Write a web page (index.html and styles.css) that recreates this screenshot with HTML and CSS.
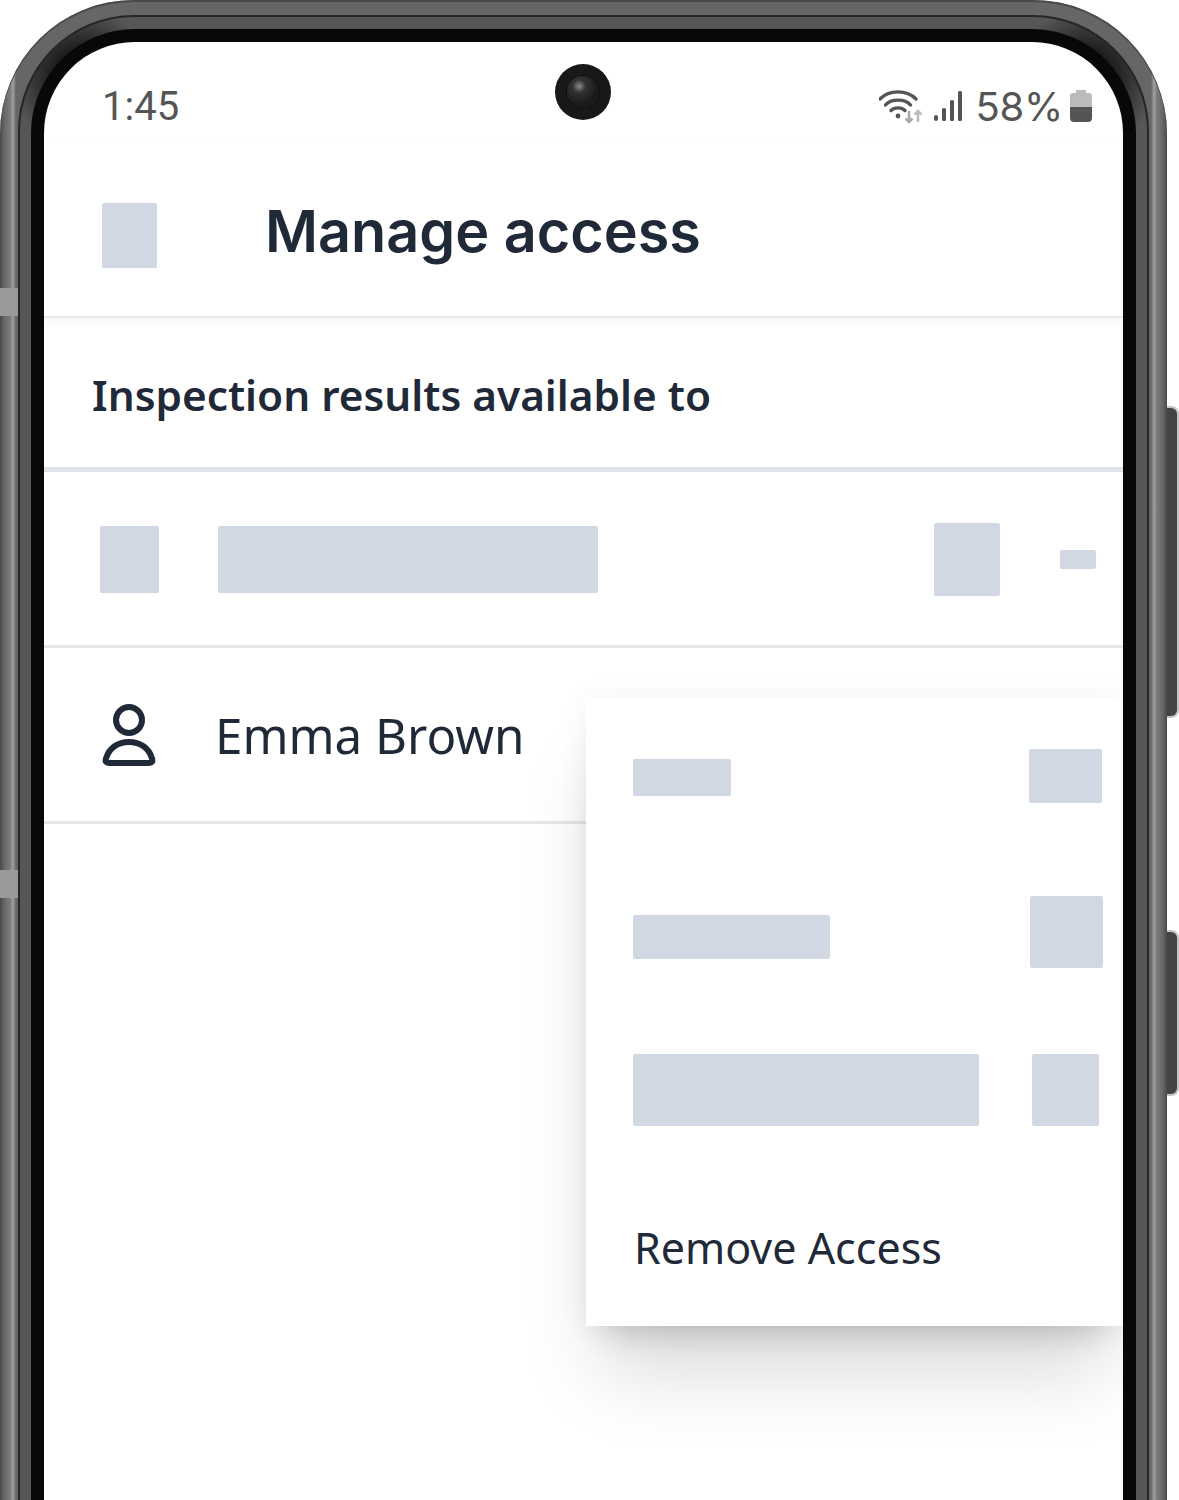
FILE: index.html
```html
<!DOCTYPE html>
<html lang="en">
<head>
    <meta charset="UTF-8">
    <meta name="viewport" content="width=device-width, initial-scale=1.0">
    <title>Manage access</title>
    <link rel="stylesheet" href="styles.css">
</head>
<body>

<div class="phone">
    <div class="side-notch side-notch-top"></div>
    <div class="side-notch side-notch-bottom"></div>
    <div class="side-btn side-btn-power"></div>
    <div class="side-btn side-btn-volume"></div>

    <div class="rim">
        <div class="rim-line">
            <div class="band">
                <div class="bezel">
                    <div class="screen">
                        <div class="camera"><div class="lens"></div></div>

                        <div class="status-bar">
                            <span class="clock">1:45</span>
                            <div class="status-icons">
                                <svg class="icon-wifi" width="44" height="36" viewBox="0 0 44 36" fill="none">
                                    <path d="M1 11 C10 1.500 28 1.500 37 11" stroke="#555" stroke-width="3.400" stroke-linecap="round"/>
                                    <path d="M6.500 17 C12 10.500 26 10.500 31.500 17" stroke="#555" stroke-width="3.400" stroke-linecap="round"/>
                                    <path d="M12 22.500 C15.500 19 22.500 19 26 22.500" stroke="#555" stroke-width="3.400" stroke-linecap="round"/>
                                    <circle cx="19" cy="28" r="2.400" fill="#555"/>
                                    <path d="M30 23 V34 M26.500 30.500 L30 34 L33.500 30.500" stroke="#aaa" stroke-width="2.600"/>
                                    <path d="M39 34 V23 M35.500 26.500 L39 23 L42.500 26.500" stroke="#bbb" stroke-width="2.600"/>
                                </svg>
                                <svg class="icon-signal" width="28" height="30" viewBox="0 0 28 30" fill="#555">
                                    <rect x="0" y="24" width="4" height="6" rx="2"/>
                                    <rect x="8" y="17" width="4" height="13" rx="1.500"/>
                                    <rect x="16" y="9" width="4" height="21" rx="1.500"/>
                                    <rect x="24" y="0" width="4" height="30" rx="1.500"/>
                                </svg>
                                <span class="battery-text">58%</span>
                                <svg class="icon-battery" width="22" height="32" viewBox="0 0 22 32">
                                    <path d="M6 0 H16 V3 H19 Q22 3 22 6 V17 H0 V6 Q0 3 3 3 H6 Z" fill="#bbb"/>
                                    <path d="M0 17 H22 V28 Q22 32 18 32 H4 Q0 32 0 28 Z" fill="#555"/>
                                </svg>
                            </div>
                        </div>

                        <div class="app-header">
                            <div class="ph ph-back"></div>
                            <h1 class="page-title">Manage access</h1>
                        </div>

                        <div class="section-title">Inspection results available to</div>

                        <div class="row row-first">
                            <div class="ph ph-avatar"></div>
                            <div class="ph ph-name"></div>
                            <div class="ph ph-role"></div>
                            <div class="ph ph-more"></div>
                        </div>

                        <div class="row row-user">
                            <svg class="icon-person" width="56" height="66" viewBox="0 0 56 66" fill="none" stroke="#1f2937" stroke-width="6">
                                <circle cx="28" cy="18" r="13"/>
                                <path d="M8 61 H48 C51 61 52 59.500 51 56.500 C48 46 39 40 28 40 C17 40 8 46 5 56.500 C4 59.500 5 61 8 61 Z"/>
                            </svg>
                            <span class="user-name">Emma Brown</span>
                        </div>

                        <!-- popup menu over the list -->
                        <div class="menu">
                            <div class="menu-row">
                                <div class="ph ph-menu-a"></div>
                                <div class="ph ph-check-a"></div>
                            </div>
                            <div class="menu-row">
                                <div class="ph ph-menu-b"></div>
                                <div class="ph ph-check-b"></div>
                            </div>
                            <div class="menu-row">
                                <div class="ph ph-menu-c"></div>
                                <div class="ph ph-check-c"></div>
                            </div>
                            <div class="menu-row menu-remove">Remove Access</div>
                        </div>
                    </div>
                </div>
            </div>
        </div>
    </div>
</div>

</body>
</html>
```

FILE: styles.css
```css
html, body {
    margin: 0;
    height: 1500px;
    overflow: hidden;
    background-color: #fff;
}

* {
    box-sizing: border-box;
}

/* Phone frame, the bottom of it is cut off by the picture */
.phone {
    position: relative;
    width: 1167px;
    height: 1500px;
}

.rim {
    height: 100%;
    padding: 15px 18px 0;
    border-radius: 134px 134px 0 0;
    background: linear-gradient(90deg, #474747 0, #666 4px, #7a7a7a 10px, #a0a0a0 13px, #666 16px, #666 1151px, #a0a0a0 1154px, #7a7a7a 1157px, #666 1163px, #474747 100%);
    box-shadow: inset 0 2px 0 #4a4a4a;
}

.rim-line {
    height: 100%;
    padding: 2px 2px 0;
    border-radius: 116px 116px 0 0;
    background-color: #262626;
}

.band {
    height: 100%;
    padding: 12px 11px 0;
    border-radius: 114px 114px 0 0;
    background:
        radial-gradient(circle 70px at 60px 60px, #1f1f1f 40%, rgba(31, 31, 31, 0) 100%),
        radial-gradient(circle 70px at 1067px 60px, #1f1f1f 40%, rgba(31, 31, 31, 0) 100%),
        #565656;
}

.bezel {
    height: 100%;
    padding: 13px 13px 0;
    border-radius: 104px 104px 0 0;
    background-color: #080808;
}

.screen {
    position: relative;
    height: 100%;
    overflow: hidden;
    border-radius: 91px 91px 0 0;
    background-color: #fff;
}

.side-notch {
    position: absolute;
    left: 0;
    width: 18px;
    height: 28px;
    background-color: #9a9a9a;
}

.side-notch-top {
    top: 288px;
}

.side-notch-bottom {
    top: 870px;
}

.side-btn {
    position: absolute;
    left: 100%;
    width: 12px;
    border: 2px solid #c4c4c4;
    border-left: 0;
    border-radius: 0 8px 8px 0;
    background-color: #444;
}

.side-btn-power {
    top: 406px;
    height: 312px;
}

.side-btn-volume {
    top: 930px;
    height: 166px;
}

.camera {
    position: absolute;
    top: 22px;
    left: 511px;
    width: 56px;
    height: 56px;
    padding: 11px;
    border-radius: 50%;
    background-color: #18181a;
}

.lens {
    height: 100%;
    border-radius: 50%;
    border: 1px dotted #050505;
    background: radial-gradient(circle at 38% 32%, #8c8c8c 0, #333 22%, #1a1a1c 60%);
}

/* Status bar */
.status-bar {
    display: flex;
    justify-content: space-between;
    align-items: center;
    height: 98px;
    padding: 30px 31px 0 58px;
    color: #555;
    font-family: Roboto, sans-serif;
    font-size: 40px;
}

.status-icons {
    display: flex;
    align-items: center;
}

.icon-signal {
    margin-left: 11px;
}

.battery-text {
    margin-left: 14px;
    font-family: Inter, sans-serif;
    font-weight: 400;
    letter-spacing: -0.3px;
}

.icon-battery {
    margin-left: 7px;
}

/* Header */
.app-header {
    display: flex;
    align-items: center;
    height: 178px;
    padding: 14px 0 0 58px;
    border-bottom: 2px solid #e5e7eb;
    box-shadow: 0 4px 8px rgba(0, 0, 0, 0.04);
}

.page-title {
    margin: 0 0 8px 108px;
    color: #1f2937;
    font-family: Inter, sans-serif;
    font-size: 57.5px;
    font-weight: 600;
}

.section-title {
    display: flex;
    align-items: center;
    height: 154px;
    padding: 4px 0 0 48px;
    border-bottom: 5px solid #dfe3ea;
    color: #1f2937;
    font-family: "Noto Sans", sans-serif;
    font-size: 42.3px;
    font-weight: 600;
}

/* List rows */
.row {
    display: flex;
    align-items: center;
    border-bottom: 3px solid #e5e7eb;
}

.row-first {
    height: 176px;
    padding: 2px 27px 0 56px;
}

.row-user {
    height: 176px;
    padding-left: 57px;
}

.user-name {
    margin-left: 58px;
    color: #1f2937;
    font-family: "Noto Sans", sans-serif;
    font-size: 49.3px;
}

/* Placeholder blocks */
.ph {
    flex-shrink: 0;
    border-radius: 2px;
    background-color: #d1d8e3;
}

.ph-back {
    width: 55px;
    height: 65px;
}

.ph-avatar {
    width: 59px;
    height: 67px;
}

.ph-name {
    width: 380px;
    height: 67px;
    margin-left: 59px;
}

.ph-role {
    width: 66px;
    height: 73px;
    margin-left: auto;
}

.ph-more {
    width: 36px;
    height: 19px;
    margin-left: 60px;
}

/* Popup menu */
.menu {
    position: absolute;
    top: 656px;
    left: 542px;
    width: 537px;
    height: 628px;
    padding-left: 47px;
    background-color: #fff;
    box-shadow: 0 60px 75px -15px rgba(0, 0, 0, 0.15), 0 24px 30px -18px rgba(0, 0, 0, 0.15), 0 0 30px rgba(0, 0, 0, 0.05);
}

.menu-row {
    display: flex;
    align-items: center;
    justify-content: space-between;
    height: 157px;
}

.menu-remove {
    padding-left: 1px;
    color: #1f2937;
    font-family: "Noto Sans", sans-serif;
    font-size: 43px;
}

.ph-menu-a {
    width: 98px;
    height: 37px;
    margin-top: 2px;
}

.ph-check-a {
    width: 73px;
    height: 54px;
    margin: 0 21px 2px 0;
}

.ph-menu-b {
    width: 197px;
    height: 44px;
    margin-top: 6px;
}

.ph-check-b {
    width: 73px;
    height: 72px;
    margin: 0 20px 4px 0;
}

.ph-menu-c {
    width: 346px;
    height: 72px;
    margin-bottom: 2px;
}

.ph-check-c {
    width: 67px;
    height: 72px;
    margin: 0 24px 2px 0;
}
```
